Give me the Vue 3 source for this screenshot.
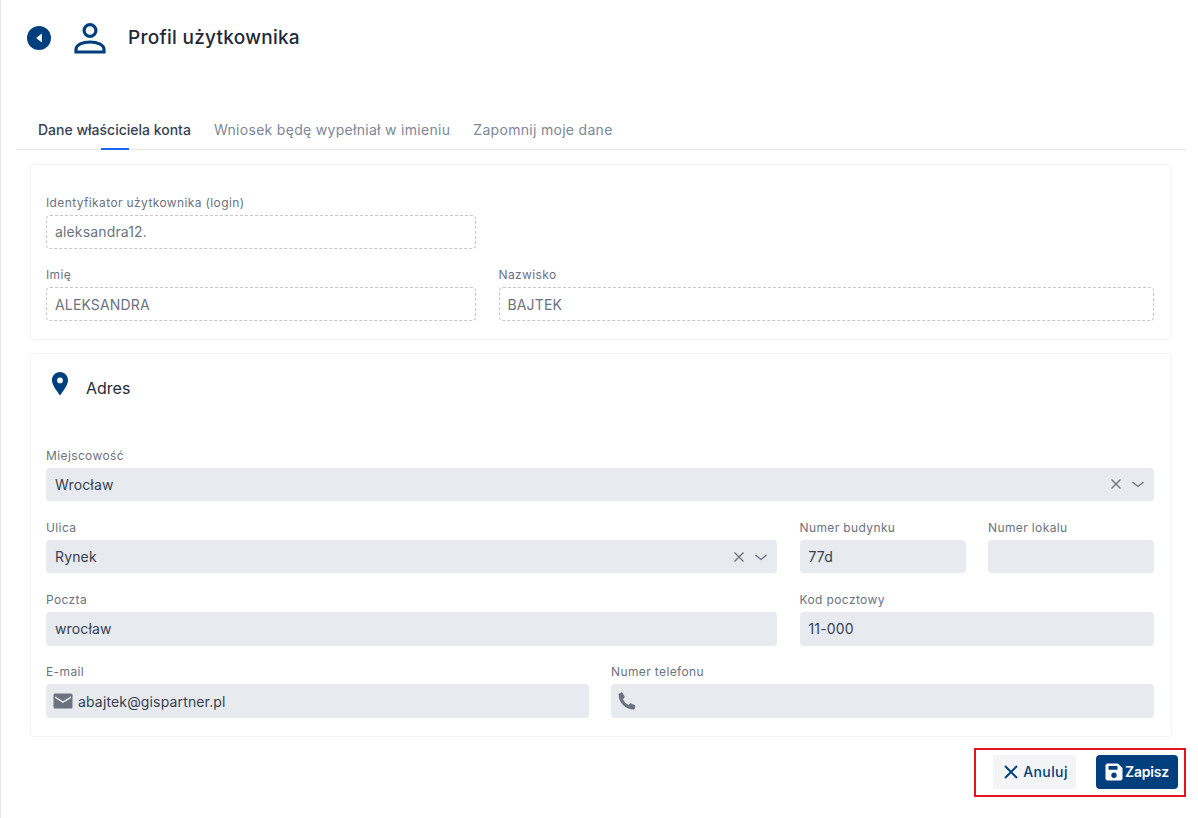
<template>
  <div class="page">
    <header class="page-header">
      <button class="back-btn" aria-label="Wstecz">
        <svg width="24" height="24" viewBox="0 0 24 24"><circle cx="12" cy="12" r="12" fill="#003f7d" /><path d="M14.800 7.600v8.800L9.200 12z" fill="#fff" /></svg>
      </button>
      <svg class="user-icon" width="36" height="36" viewBox="0 0 36 36" fill="none" stroke="#003f7d" stroke-width="3.200">
        <circle cx="18" cy="10.500" r="5.900" />
        <path d="M4 32v-2.500c0-5 7-7.500 14-7.500s14 2.500 14 7.500V32z" />
      </svg>
      <h1>Profil użytkownika</h1>
    </header>

    <nav class="tabs">
      <a v-for="(tab, index) in tabs" :key="tab" class="tab" :class="{ active: index === 0 }">{{ tab }}</a>
    </nav>

    <section class="card card-user">
      <div class="row row-login">
        <div class="field">
          <label>Identyfikator użytkownika (login)</label>
          <div class="input readonly">aleksandra12.</div>
        </div>
      </div>
      <div class="row row-name">
        <div class="field">
          <label>Imię</label>
          <div class="input readonly">ALEKSANDRA</div>
        </div>
        <div class="field">
          <label>Nazwisko</label>
          <div class="input readonly">BAJTEK</div>
        </div>
      </div>
    </section>

    <section class="card card-address">
      <div class="section-title">
        <svg width="20" height="26" viewBox="0 0 20 26"><path fill-rule="evenodd" d="M10 1C5.200 1 2 4.800 2 9.200c0 5.400 5.200 11 8 15.300 2.800-4.300 8-9.900 8-15.300C18 4.800 14.800 1 10 1zm0 5.500a2.900 2.900 0 1 1 0 5.800 2.900 2.900 0 0 1 0-5.800z" fill="#003f7d" /></svg>
        <h2>Adres</h2>
      </div>
      <div class="row">
        <div class="field">
          <label>Miejscowość</label>
          <div class="input filled">
            <span class="grow">Wrocław</span>
            <svg class="sel-icon" width="14" height="14" viewBox="0 0 14 14" fill="none" stroke="#6b7280" stroke-width="1.300"><path d="M2.500 2.500l9 9M11.500 2.500l-9 9" /></svg>
            <svg class="sel-icon" width="14" height="14" viewBox="0 0 14 14" fill="none" stroke="#6b7280" stroke-width="1.300"><path d="M1.500 5L7 9.500 12.500 5" /></svg>
          </div>
        </div>
      </div>
      <div class="row row-street">
        <div class="field">
          <label>Ulica</label>
          <div class="input filled">
            <span class="grow">Rynek</span>
            <svg class="sel-icon" width="14" height="14" viewBox="0 0 14 14" fill="none" stroke="#6b7280" stroke-width="1.300"><path d="M2.500 2.500l9 9M11.500 2.500l-9 9" /></svg>
            <svg class="sel-icon" width="14" height="14" viewBox="0 0 14 14" fill="none" stroke="#6b7280" stroke-width="1.300"><path d="M1.500 5L7 9.500 12.500 5" /></svg>
          </div>
        </div>
        <div class="field">
          <label>Numer budynku</label>
          <div class="input filled">77d</div>
        </div>
        <div class="field">
          <label>Numer lokalu</label>
          <div class="input filled"></div>
        </div>
      </div>
      <div class="row row-post">
        <div class="field">
          <label>Poczta</label>
          <div class="input filled">wrocław</div>
        </div>
        <div class="field">
          <label>Kod pocztowy</label>
          <div class="input filled">11-000</div>
        </div>
      </div>
      <div class="row row-contact">
        <div class="field">
          <label>E-mail</label>
          <div class="input filled with-icon">
            <svg width="20" height="16" viewBox="0 0 20 16"><path d="M2 .500h16A1.500 1.500 0 0 1 19.500 2v12a1.500 1.500 0 0 1-1.500 1.500H2A1.500 1.500 0 0 1 .500 14V2A1.500 1.500 0 0 1 2 .500zM2 3.200v1.800l8 5 8-5V3.200l-8 5z" fill="#6b7280" fill-rule="evenodd" /></svg>
            abajtek@gispartner.pl
          </div>
        </div>
        <div class="field">
          <label>Numer telefonu</label>
          <div class="input filled with-icon">
            <svg width="18" height="18" viewBox="0 0 18 18"><path d="M4.600.800l2 3.800c.2.400.100.800-.2 1.100L5 7.200c.9 2.300 3.300 4.800 5.700 5.800l1.500-1.400c.3-.3.700-.4 1.100-.2l3.500 1.800c.4.200.6.600.5 1l-.5 2.600c-.1.500-.5.800-1 .8C7.500 17.600.500 10.500.600 2.500c0-.5.300-.9.800-1L3.600.300c.4-.100.800.100 1 .5z" fill="#6b7280" /></svg>
          </div>
        </div>
      </div>
    </section>

    <footer class="actions">
      <div class="highlight">
        <button class="btn btn-cancel">
          <svg width="16" height="16" viewBox="0 0 16 16" fill="none" stroke="#003f7d" stroke-width="1.800"><path d="M2 2l12 12M14 2L2 14" /></svg>
          Anuluj
        </button>
        <button class="btn btn-save">
          <svg width="18" height="18" viewBox="0 0 18 18"><path fill-rule="evenodd" d="M2.500.500h10.300L17.500 5v10.500a2 2 0 0 1-2 2h-13a2 2 0 0 1-2-2v-13a2 2 0 0 1 2-2zM3.500 3v3.800h9V3zM9 9.500a2.700 2.700 0 1 0 0 5.400 2.700 2.700 0 0 0 0-5.400z" fill="#fff" /></svg>
          Zapisz
        </button>
      </div>
    </footer>
  </div>
</template>

<script setup>
const tabs = ['Dane właściciela konta', 'Wniosek będę wypełniał w imieniu', 'Zapomnij moje dane']
</script>

<style>
html, body {
  margin: 0;
  background: #fff;
}
</style>

<style scoped>
.page {
  box-sizing: border-box;
  width: 1198px;
  height: 818px;
  overflow: hidden;
  padding: 0 12px 0 15px;
  border-left: 1px solid #e5e7eb;
  font-family: Inter, sans-serif;
  color: #1f2937;
}
.page-header {
  display: flex;
  align-items: center;
  height: 75px;
  padding-left: 11px;
}
.back-btn {
  width: 24px;
  height: 24px;
  padding: 0;
  border: none;
  background: none;
}
.back-btn svg {
  display: block;
}
.user-icon {
  margin-left: 21px;
}
h1 {
  margin: 0 0 0 20px;
  font-size: 19px;
  font-weight: 500;
  letter-spacing: 0.27px;
  color: #1f2937;
}
.tabs {
  display: flex;
  gap: 23px;
  height: 40px;
  margin-top: 34px;
  padding-left: 22px;
  border-bottom: 1px solid #e5e7eb;
}
.tab {
  position: relative;
  font-size: 14px;
  font-weight: 400;
  letter-spacing: 0.3px;
  line-height: 42px;
  color: #7c8798;
}
.tab.active {
  font-weight: 500;
  letter-spacing: 0;
  color: #374151;
}
.tab.active::after {
  content: "";
  position: absolute;
  left: 63px;
  bottom: -1px;
  width: 28px;
  height: 2px;
  background: #1c64f2;
}
.card {
  box-sizing: border-box;
  width: 1142px;
  margin-left: 14px;
  padding: 0 17px 0 15px;
  border: 1px solid #f3f4f6;
  border-radius: 4px;
}
.card-user {
  height: 176px;
  margin-top: 14px;
  padding-top: 28px;
}
.card-address {
  height: 384px;
  margin-top: 13px;
}
.section-title {
  display: flex;
  align-items: center;
  gap: 16px;
  height: 66px;
  padding: 0 0 0 4px;
  margin-bottom: 25.600px;
}
.section-title svg {
  position: relative;
  top: -3px;
}
h2 {
  margin: 0;
  padding-top: 2px;
  font-size: 16px;
  font-weight: 400;
  color: #1f2937;
}
.row {
  display: grid;
  grid-template-columns: 1fr;
  column-gap: 22.500px;
  margin-bottom: 16.800px;
}
.row-name {
  grid-template-columns: 430px 655.500px;
}
.row-login {
  grid-template-columns: 430px;
}
.row-street {
  grid-template-columns: 731px 166px 166px;
}
.row-post {
  grid-template-columns: 731px 354.500px;
}
.row-contact {
  column-gap: 22px;
  grid-template-columns: 543px 543px;
}
.field label {
  display: block;
  height: 17px;
  padding-top: 1px;
  margin-bottom: 4px;
  font-size: 12px;
  letter-spacing: 0.38px;
  line-height: 18px;
  color: #6b7280;
}
.input {
  box-sizing: border-box;
  display: flex;
  align-items: center;
  height: 33.500px;
  padding: 0 9px;
  border-radius: 4px;
  font-size: 14px;
  letter-spacing: 0.15px;
  color: #374151;
}
.readonly {
  border: 1px dashed #c4c8ce;
  color: #6b7280;
  padding: 0 8px;
}
.filled {
  background: #e7eaee;
}
.with-icon {
  gap: 5px;
  padding-left: 7px;
}
.grow {
  flex: 1;
}
.sel-icon {
  margin-left: 8px;
  flex: none;
}
.actions {
  display: flex;
  justify-content: flex-end;
  margin-top: 11px;
}
.highlight {
  box-sizing: border-box;
  display: flex;
  align-items: center;
  justify-content: flex-end;
  gap: 20px;
  width: 212px;
  height: 49px;
  padding: 0 6px 2px 0;
  border: 2px solid #e3141f;
}
.btn {
  box-sizing: border-box;
  display: flex;
  align-items: center;
  justify-content: center;
  height: 34px;
  width: 82px;
  padding: 0;
  border: none;
  border-radius: 4px;
  font-family: inherit;
  font-size: 14px;
  font-weight: 600;
}
.btn-cancel {
  width: 83px;
  gap: 4px;
  padding-left: 2px;
  background: #f3f4f6;
  color: #003f7d;
  font-weight: 500;
  letter-spacing: 0.4px;
}
.btn-save {
  gap: 2px;
  background: #003f7d;
  color: #fff;
  letter-spacing: -0.2px;
}
</style>
